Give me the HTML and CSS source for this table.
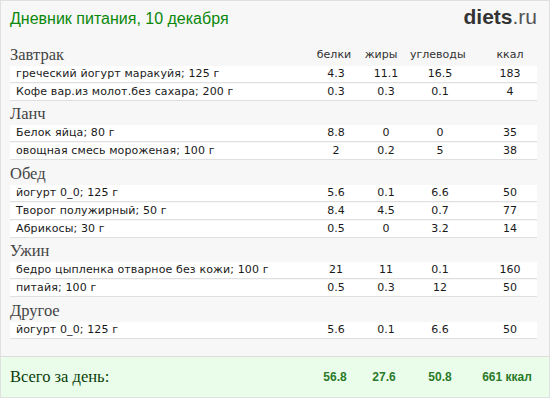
FILE: index.html
```html
<!DOCTYPE html>
<html lang="ru">
<head>
<meta charset="utf-8">
<link rel="stylesheet" href="styles.css">
</head>
<body>
<div class="page">
  <div class="top">
    <div class="title">Дневник питания, 10 декабря</div>
    <div class="logo"><b>diets</b>.ru</div>
  </div>

  <div class="body">
    <div class="sec-head">
      <span class="sec-name">Завтрак</span>
      <span class="lab lab1">белки</span>
      <span class="lab lab2">жиры</span>
      <span class="lab lab3">углеводы</span>
      <span class="lab lab4">ккал</span>
    </div>
    <div class="row"><span class="name">греческий йогурт маракуйя; 125 г</span><span class="v">4.3</span><span class="v">11.1</span><span class="v">16.5</span><span class="v k">183</span></div>
    <div class="row"><span class="name">Кофе вар.из молот.без сахара; 200 г</span><span class="v">0.3</span><span class="v">0.3</span><span class="v">0.1</span><span class="v k">4</span></div>

    <div class="sec-head"><span class="sec-name">Ланч</span></div>
    <div class="row"><span class="name">Белок яйца; 80 г</span><span class="v">8.8</span><span class="v">0</span><span class="v">0</span><span class="v k">35</span></div>
    <div class="row"><span class="name">овощная смесь мороженая; 100 г</span><span class="v">2</span><span class="v">0.2</span><span class="v">5</span><span class="v k">38</span></div>

    <div class="sec-head"><span class="sec-name">Обед</span></div>
    <div class="row"><span class="name">йогурт 0_0; 125 г</span><span class="v">5.6</span><span class="v">0.1</span><span class="v">6.6</span><span class="v k">50</span></div>
    <div class="row"><span class="name">Творог полужирный; 50 г</span><span class="v">8.4</span><span class="v">4.5</span><span class="v">0.7</span><span class="v k">77</span></div>
    <div class="row"><span class="name">Абрикосы; 30 г</span><span class="v">0.5</span><span class="v">0</span><span class="v">3.2</span><span class="v k">14</span></div>

    <div class="sec-head"><span class="sec-name">Ужин</span></div>
    <div class="row"><span class="name">бедро цыпленка отварное без кожи; 100 г</span><span class="v">21</span><span class="v">11</span><span class="v">0.1</span><span class="v k">160</span></div>
    <div class="row"><span class="name">питайя; 100 г</span><span class="v">0.5</span><span class="v">0.3</span><span class="v">12</span><span class="v k">50</span></div>

    <div class="sec-head"><span class="sec-name">Другое</span></div>
    <div class="row"><span class="name">йогурт 0_0; 125 г</span><span class="v">5.6</span><span class="v">0.1</span><span class="v">6.6</span><span class="v k">50</span></div>
  </div>

  <div class="total">
    <span class="total-name">Всего за день:</span>
    <span class="t t1">56.8</span>
    <span class="t t2">27.6</span>
    <span class="t t3">50.8</span>
    <span class="t t4">661 ккал</span>
  </div>
</div>
</body>
</html>
```

FILE: styles.css
```css
html, body {
  margin: 0;
  padding: 0;
  background: #ffffff;
}

.page {
  width: 550px;
  height: 398px;
  box-sizing: border-box;
  border: 1px solid #e0e0e0;
  background: #f7f7f7;
  display: flex;
  flex-direction: column;
  font-family: "DejaVu Sans", Verdana, sans-serif;
  color: #222;
}

.top {
  height: 41px;
  box-sizing: border-box;
  padding: 6px 12px 0 9px;
  display: flex;
  justify-content: space-between;
  align-items: baseline;
}

.title {
  font-family: "Liberation Sans", Arial, sans-serif;
  font-size: 16px;
  line-height: 20px;
  color: #0b870b;
}

.logo {
  font-family: "Liberation Sans", Arial, sans-serif;
  font-size: 21px;
  line-height: 20px;
  color: #555;
}

.logo b {
  color: #333;
  font-weight: bold;
}

.body {
  padding: 0 12px 0 9px;
}

.sec-head,
.row,
.total {
  display: grid;
  grid-template-columns: 1fr 52px 48px 60px 67px;
  align-items: center;
}

.sec-head {
  height: 23.5px;
  padding-top: 2px;
  box-sizing: border-box;
}

.sec-name {
  font-family: "Liberation Serif", "Times New Roman", serif;
  font-size: 16.5px;
  line-height: 20px;
  color: #444;
}

.lab {
  font-size: 11px;
  color: #333;
  text-align: center;
}

.lab1 { padding-right: 4px; }
.lab2 { padding-right: 10px; }
.lab3 { padding-right: 10px; }
.lab4 { padding-left: 13px; }

.row {
  height: 16px;
  background: #ffffff;
  border-bottom: 1px solid #e0e0e0;
  margin-bottom: 1px;
  font-size: 11px;
  line-height: 16px;
  color: #1a1a1a;
}

.name {
  padding-left: 6px;
  white-space: nowrap;
  letter-spacing: 0.12px;
}

.v {
  text-align: center;
}

.v.k {
  padding-left: 13px;
}

.total {
  margin-top: auto;
  height: 41px;
  box-sizing: border-box;
  border-top: 1px solid #dcdcdc;
  background: #eafdea;
  padding: 0 12px 0 9px;
  line-height: 40px;
}

.total-name {
  font-family: "Liberation Serif", "Times New Roman", serif;
  font-size: 16.5px;
  color: #0a3d0a;
}

.t {
  font-family: "Liberation Sans", Arial, sans-serif;
  font-weight: bold;
  font-size: 12px;
  color: #2a7a2a;
  text-align: center;
}

.t1 { padding-right: 2px; }
.t2 { padding-right: 4px; }
.t4 { padding-left: 7px; white-space: nowrap; }
```
